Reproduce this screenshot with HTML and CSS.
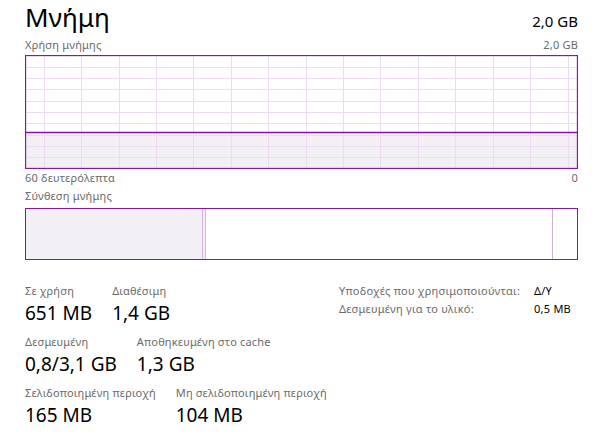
FILE: index.html
```html
<!DOCTYPE html>
<html lang="el">
<head>
<meta charset="utf-8">
<title>Μνήμη</title>
<link rel="stylesheet" href="styles.css">
</head>
<body>
<main class="panel">
  <header class="head">
    <h1 class="title">Μνήμη</h1>
    <span class="total">2,0 GB</span>
  </header>
  <div class="sub sub-top"><span>Χρήση μνήμης</span><span>2,0 GB</span></div>
  <div class="chart">
    <svg class="chart-svg" width="553" height="114" viewBox="0 0 553 114" xmlns="http://www.w3.org/2000/svg">
      <rect x="1" y="78" width="551" height="35" fill="#f2f0f4"/>
      <g stroke="#ecdcf1" stroke-width="1">
        <line x1="1" y1="12.5" x2="552" y2="12.5"/>
        <line x1="1" y1="23.5" x2="552" y2="23.5"/>
        <line x1="1" y1="34.5" x2="552" y2="34.5"/>
        <line x1="1" y1="46.5" x2="552" y2="46.5"/>
        <line x1="1" y1="57.5" x2="552" y2="57.5"/>
        <line x1="1" y1="68.5" x2="552" y2="68.5"/>
        <line x1="1" y1="80.5" x2="552" y2="80.5"/>
        <line x1="1" y1="91.5" x2="552" y2="91.5"/>
        <line x1="1" y1="102.5" x2="552" y2="102.5"/>
        <line x1="19.5" y1="1" x2="19.5" y2="113"/>
        <line x1="56.5" y1="1" x2="56.5" y2="113"/>
        <line x1="94.5" y1="1" x2="94.5" y2="113"/>
        <line x1="131.5" y1="1" x2="131.5" y2="113"/>
        <line x1="168.5" y1="1" x2="168.5" y2="113"/>
        <line x1="206.5" y1="1" x2="206.5" y2="113"/>
        <line x1="243.5" y1="1" x2="243.5" y2="113"/>
        <line x1="281.5" y1="1" x2="281.5" y2="113"/>
        <line x1="318.5" y1="1" x2="318.5" y2="113"/>
        <line x1="355.5" y1="1" x2="355.5" y2="113"/>
        <line x1="393.5" y1="1" x2="393.5" y2="113"/>
        <line x1="430.5" y1="1" x2="430.5" y2="113"/>
        <line x1="468.5" y1="1" x2="468.5" y2="113"/>
        <line x1="505.5" y1="1" x2="505.5" y2="113"/>
        <line x1="543.5" y1="1" x2="543.5" y2="113"/>
      </g>
      <line x1="1" y1="77.5" x2="552" y2="77.5" stroke="#8b12ae" stroke-width="1.3"/>
      <rect x="0.5" y="0.5" width="552" height="113" fill="none" stroke="#8b12ae" stroke-width="1.3"/>
    </svg>
  </div>
  <div class="sub sub-axis"><span>60 δευτερόλεπτα</span><span>0</span></div>
  <div class="sub sub-comp"><span>Σύνθεση μνήμης</span></div>
  <div class="comp">
    <div class="seg seg-used"></div>
    <div class="seg seg-mod"></div>
    <div class="seg seg-standby"></div>
    <div class="seg seg-free"></div>
  </div>
  <section class="stats">
    <div class="stats-left">
      <div class="row">
        <div class="stat"><div class="label">Σε χρήση</div><div class="value">651 MB</div></div>
        <div class="stat"><div class="label">Διαθέσιμη</div><div class="value">1,4 GB</div></div>
      </div>
      <div class="row">
        <div class="stat"><div class="label">Δεσμευμένη</div><div class="value">0,8/3,1 GB</div></div>
        <div class="stat"><div class="label">Αποθηκευμένη στο cache</div><div class="value">1,3 GB</div></div>
      </div>
      <div class="row">
        <div class="stat"><div class="label">Σελιδοποιημένη περιοχή</div><div class="value">165 MB</div></div>
        <div class="stat"><div class="label">Μη σελιδοποιημένη περιοχή</div><div class="value">104 MB</div></div>
      </div>
    </div>
    <dl class="stats-right">
      <dt>Υποδοχές που χρησιμοποιούνται:</dt><dd>Δ/Υ</dd>
      <dt>Δεσμευμένη για το υλικό:</dt><dd>0,5 MB</dd>
    </dl>
  </section>
</main>
</body>
</html>
```

FILE: styles.css
```css
html, body {
  margin: 0;
  padding: 0;
  background: #ffffff;
}

body {
  font-family: "Noto Sans", "Open Sans", sans-serif;
  color: #000000;
}

.panel {
  width: 553px;
  padding: 2px 0 0 25px;
  display: flex;
  flex-direction: column;
}

.head {
  display: flex;
  justify-content: space-between;
  align-items: baseline;
  height: 30px;
}

.title {
  margin: 0;
  font-size: 26px;
  font-weight: 400;
  line-height: 30px;
}

.total {
  font-size: 15px;
  line-height: 30px;
}

.sub {
  display: flex;
  justify-content: space-between;
  font-size: 11px;
  letter-spacing: 0.2px;
  line-height: 14px;
  color: #6a6a6a;
}

.sub-top {
  margin-top: 6px;
}

.chart {
  margin-top: 3px;
  height: 114px;
}

.chart-svg {
  display: block;
}

.sub-axis {
  margin-top: 2px;
}

.sub-comp {
  margin-top: 4px;
}

.comp {
  margin-top: 5px;
  height: 50px;
  border: 1.3px solid #8b12ae;
  display: flex;
}

.seg-used {
  width: 176px;
  background: #f2f0f4;
}

.seg-mod {
  width: 2px;
  background: #f4eaf7;
  border-left: 1px solid #d9b7e3;
  border-right: 1px solid #d9b7e3;
}

.seg-standby {
  flex: 1;
}

.seg-free {
  width: 24px;
  border-left: 1px solid #cfaedb;
}

.stats {
  margin-top: 24px;
  display: flex;
}

.stats-left {
  width: 314px;
  display: flex;
  flex-direction: column;
  gap: 10px;
}

.row {
  display: flex;
  gap: 20px;
}

.label {
  font-size: 11px;
  letter-spacing: 0.18px;
  line-height: 14px;
  color: #6a6a6a;
}

.value {
  margin-top: 3px;
  font-size: 19px;
  line-height: 24px;
}

.stats-right {
  margin: 0;
  display: grid;
  grid-template-columns: 195px auto;
  row-gap: 4px;
  align-content: start;
  font-size: 11px;
  letter-spacing: 0.25px;
  line-height: 14px;
}

.stats-right dt {
  color: #6a6a6a;
}

.stats-right dd {
  margin: 0;
  color: #000000;
}
```
